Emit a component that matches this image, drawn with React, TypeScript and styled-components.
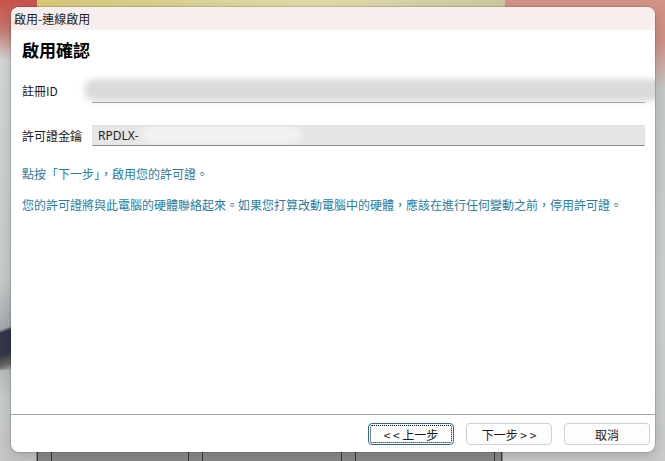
import styled, { createGlobalStyle } from 'styled-components';

const GlobalStyle = createGlobalStyle`
  html, body {
    margin: 0;
    padding: 0;
  }
  body {
    font-family: "Noto Sans CJK TC", "Noto Sans", sans-serif;
  }
`;

const UI_FONT = `"Noto Sans CJK TC", "Noto Sans", sans-serif`;
const LINK_BLUE = '#2a7c9f';

function App() {
  return (
    <>
      <GlobalStyle />
      <Desktop>
        <Window>
          <TitleBar>啟用-連線啟用</TitleBar>
          <Body>
            <Heading>啟用確認</Heading>
            <Form>
              <Label>註冊ID</Label>
              <UnderlinedField>
                <Smudge $left={-8} $right={-22} $color="#dadada" />
              </UnderlinedField>
              <Label>許可證金鑰</Label>
              <KeyField>
                <KeyText>RPDLX-</KeyText>
                <Smudge $left={48} $width={160} $color="#f1f1f1" />
              </KeyField>
            </Form>
            <Hint $top={19}>點按「下一步」，啟用您的許可證。</Hint>
            <Hint $top={13}>
              您的許可證將與此電腦的硬體聯絡起來。如果您打算改動電腦中的硬體，應該在進行任何變動之前，停用許可證。
            </Hint>
          </Body>
          <Footer>
            <WizardButton $focused>&lt; &lt; 上一步</WizardButton>
            <WizardButton>下一步 &gt; &gt;</WizardButton>
            <WizardButton>取消</WizardButton>
          </Footer>
        </Window>
      </Desktop>
    </>
  );
}

// wallpaper and the windows peeking out around the dialog
const Desktop = styled.div`
  width: 665px;
  height: 461px;
  overflow: hidden;
  box-sizing: border-box;
  padding: 7px 10px 0 11px;
  background:
    linear-gradient(90deg, #3b3b3b 0 1px, transparent 1px 14px, #3b3b3b 14px 15px, transparent 15px)
      37px 452px / 16px 9px no-repeat,
    linear-gradient(90deg, #3b3b3b 0 1px, transparent 1px 14px, #3b3b3b 14px 15px, transparent 15px)
      188px 452px / 16px 9px no-repeat,
    linear-gradient(90deg, #3b3b3b 0 1px, transparent 1px 14px, #3b3b3b 14px 15px, transparent 15px)
      341px 452px / 16px 9px no-repeat,
    linear-gradient(90deg, #3b3b3b 0 1px, transparent 1px 7px, #3b3b3b 7px 8px, transparent 8px)
      494px 452px / 9px 9px no-repeat,
    linear-gradient(#8c8c8c, #8a8a8a) 36px 452px / 467px 9px no-repeat,
    linear-gradient(90deg, #d6c978, #e2dcae 60%, #cfc9a0) 37px 0 / 468px 8px no-repeat,
    linear-gradient(160deg, transparent 0 40%, #33364a 45% 75%, #6a6a6a 90%, transparent 100%)
      0 300px / 12px 70px no-repeat,
    linear-gradient(#c9524a 0, #c77a70 30px, #d2d6d6 60px, #c6cbcb 280px, #a5a8ad 330px, #c9cccc 400px, #c4c6c6)
      0 0 / 37px 461px no-repeat,
    linear-gradient(#d39486 0, #cf8f85 40px, #c6c9c9 90px, #cdd0d0 300px, #c9cbcb)
      505px 0 / 160px 461px no-repeat,
    #c7caca;
`;

const Window = styled.div`
  width: 644px;
  height: 445px;
  display: flex;
  flex-direction: column;
  background: #ffffff;
  border-radius: 8px;
  overflow: hidden;
  box-shadow: 0 0 0 1px rgba(0, 0, 0, 0.12), 0 4px 14px rgba(0, 0, 0, 0.18);
`;

const TitleBar = styled.div`
  height: 23px;
  flex-shrink: 0;
  padding-left: 3px;
  background: #f7efed;
  color: #1c1c1c;
  font-family: ${UI_FONT};
  font-size: 12px;
  line-height: 23px;
`;

const Body = styled.div`
  flex: 1;
  padding: 10px 10px 0 11px;
  font-family: ${UI_FONT};
  color: #1a1a1a;
`;

const Heading = styled.h1`
  margin: 0;
  font-family: "Liberation Serif", "Noto Sans CJK TC", serif;
  font-size: 17px;
  font-weight: 700;
  line-height: 24px;
  color: #000;
`;

const Form = styled.div`
  display: grid;
  grid-template-columns: 70px 1fr;
  grid-template-rows: 24px 21px;
  row-gap: 22px;
  align-items: center;
  margin-top: 15px;
`;

const Label = styled.div`
  font-size: 12px;
  line-height: 16px;
  color: #1a1a1a;
`;

const UnderlinedField = styled.div`
  position: relative;
  height: 24px;
  box-sizing: border-box;
  border-bottom: 1px solid #8c8c8c;
`;

const KeyField = styled.div`
  position: relative;
  height: 21px;
  box-sizing: border-box;
  display: flex;
  align-items: center;
  padding-left: 5px;
  background: #e6e6e6;
  border: 1px solid #e1e1e1;
  border-bottom-color: #8a8a8a;
  overflow: hidden;
`;

const KeyText = styled.span`
  font-family: "Noto Sans", ${UI_FONT};
  font-size: 12px;
  color: #222;
`;

// blurred patch laid over the hidden part of a value
const Smudge = styled.div<{ $left: number; $right?: number; $width?: number; $color: string }>`
  position: absolute;
  top: 0;
  bottom: 1px;
  left: ${(p) => p.$left}px;
  ${(p) => (p.$width !== undefined ? `width: ${p.$width}px;` : `right: ${p.$right ?? 0}px;`)}
  background: ${(p) => p.$color};
  border-radius: 12px;
  filter: blur(3px);
`;

const Hint = styled.p<{ $top: number }>`
  margin: ${(p) => p.$top}px 0 0;
  font-size: 12px;
  line-height: 18px;
  color: ${LINK_BLUE};
  white-space: nowrap;
`;

const Footer = styled.div`
  flex-shrink: 0;
  display: flex;
  justify-content: flex-end;
  gap: 12px;
  padding: 8px 5px 7px 0;
  border-top: 1px solid #a5a5a5;
`;

const WizardButton = styled.button<{ $focused?: boolean }>`
  width: 86px;
  height: 22px;
  padding: 0;
  font-family: ${UI_FONT};
  font-size: 12px;
  color: #1a1a1a;
  background: #fdfdfd;
  border: 1px solid ${(p) => (p.$focused ? '#2d6f8f' : '#d0d0d0')};
  border-radius: 4px;
  outline: ${(p) => (p.$focused ? '1px dotted #000' : 'none')};
  outline-offset: -3px;
`;

export default App;
